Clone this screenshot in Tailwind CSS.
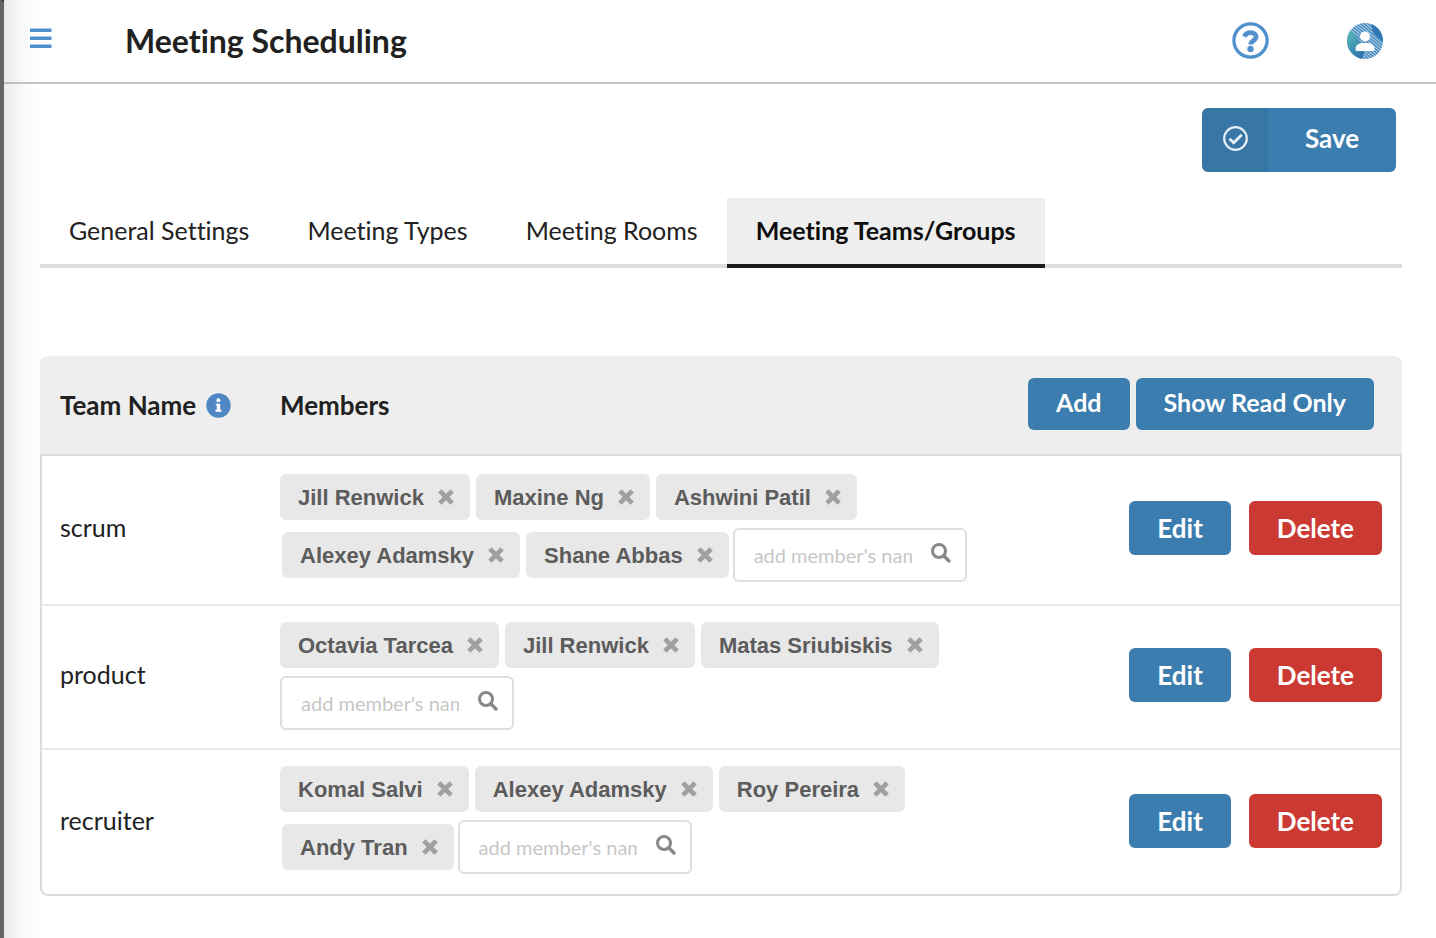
<!DOCTYPE html>
<html lang="en">
<head>
<meta charset="utf-8">
<meta name="viewport" content="width=device-width, initial-scale=1">
<title>Meeting Scheduling</title>
<script src="https://cdn.jsdelivr.net/npm/@tailwindcss/browser@4"></script>
</head>
<body class="min-h-screen bg-white font-['Lato',sans-serif] text-[26px] text-[#212121] [font-variant-ligatures:none]">
<svg class="hidden" aria-hidden="true">
  <symbol id="x" viewBox="0 0 16 16"><path d="M3.500 3.500 12.500 12.500M12.500 3.500 3.500 12.500" stroke="currentColor" stroke-width="4.600" stroke-linecap="square" fill="none"/></symbol>
  <symbol id="search" viewBox="0 0 20 20"><circle cx="8" cy="8" r="6.500" fill="none" stroke="currentColor" stroke-width="3"/><path d="m12.800 12.800 5.200 5.200" stroke="currentColor" stroke-width="3.400" stroke-linecap="round"/></symbol>
</svg>
<div class="flex min-h-screen">
  <aside class="w-1 shrink-0 bg-[#2b2b2b]"><div class="h-full rounded-tr-sm bg-[#666]"></div></aside>
  <div class="relative min-w-0 flex-1">
    <div class="pointer-events-none absolute inset-y-0 left-0 w-10 bg-linear-to-r from-black/8 via-black/2 to-transparent"></div>
    <header class="flex h-[84px] items-center border-b-2 border-[#c8c8c8] pr-[53px] pl-[26px]">
      <button type="button" aria-label="Open menu" class="mb-1.5 text-[#4f90cd]">
        <svg class="h-5 w-[22px]" viewBox="0 0 22 20" fill="currentColor"><path d="M0 .5h21.500v3.600H0zM0 8.500h21.500v3.600H0zM0 16.500h21.500v3.600H0z"/></svg>
      </button>
      <h1 class="ml-[73px] text-[32px] leading-10 font-bold">Meeting Scheduling</h1>
      <button type="button" aria-label="Help" class="mb-0.5 ml-auto text-[#4f90cd]">
        <svg class="size-[37px]" viewBox="0 0 37 37"><circle cx="18.500" cy="18.500" r="16.600" fill="none" stroke="currentColor" stroke-width="3.300"/><path d="M12.400 14.600C13.500 11.700 15.700 10.600 18.700 10.600c3.200 0 5.400 1.700 5.400 4.200 0 3.900-5.400 3.700-5.400 7.800" fill="none" stroke="currentColor" stroke-width="4.700"/><circle cx="18.500" cy="27" r="3.200" fill="currentColor"/></svg>
      </button>
      <button type="button" aria-label="Account" class="ml-[78px]">
        <svg class="size-9" viewBox="0 0 36 36">
          <defs>
            <clipPath id="disc"><circle cx="18" cy="18" r="18"/></clipPath>
            <pattern id="hatch" width="2.400" height="2.400" patternUnits="userSpaceOnUse" patternTransform="rotate(40)"><rect width="2.400" height="2.400" fill="#4a8ec2"/><rect width="2.400" height=".7" fill="#d5e6f2"/></pattern>
            <linearGradient id="teal" x1="0" y1="0" x2=".6" y2="1"><stop offset="0" stop-color="#63bfb5"/><stop offset=".4" stop-color="#4ba5b4"/><stop offset="1" stop-color="#2f76ae"/></linearGradient>
          </defs>
          <g clip-path="url(#disc)"><rect width="36" height="36" fill="url(#hatch)"/><path d="M0 6 5 9l12 14v7l-2 6H0z" fill="url(#teal)"/><path d="M24 0h12v19L26 10z" fill="#2f78b4"/></g>
          <circle cx="18" cy="13.500" r="5" fill="#fff"/><path d="M8.500 26c0-3.800 3.300-6 7-6h5c3.700 0 7 2.200 7 6 0 1.500-.8 2-2 2h-15c-1.200 0-2-.5-2-2z" fill="#fff"/>
        </svg>
      </button>
    </header>

    <main class="pt-6 pr-[34px] pb-10 pl-9">
      <div class="flex justify-end pr-1.5">
        <button type="button" class="flex h-16 overflow-hidden rounded-md bg-[#3b7dae] font-bold text-white">
          <span class="flex h-full w-[66px] items-center justify-center bg-black/5 pb-0.5">
            <svg class="mb-0.5 size-[25px]" viewBox="0 0 25 25" fill="none" stroke="#e6eef5"><circle cx="12.500" cy="12.500" r="11.300" stroke-width="2.200"/><path d="m6.500 12.800 4.200 4 8.100-8" stroke-width="2.900"/></svg>
          </span>
          <span class="flex h-full w-32 items-center justify-center pb-1">Save</span>
        </button>
      </div>

      <nav class="mt-[26px] flex h-[70px] border-b-4 border-[#dedede] text-[25px]" aria-label="Settings sections">
        <a href="#general" class="flex h-[66px] items-center px-[29px]">General Settings</a>
        <a href="#types" class="flex h-[66px] items-center px-[29px]">Meeting Types</a>
        <a href="#rooms" class="flex h-[66px] items-center px-[29px]">Meeting Rooms</a>
        <a href="#teams" aria-current="page" class="flex h-[70px] items-center border-b-4 border-[#1b1c1d] bg-[#eee] px-[29px] font-bold text-[#0d0d0d]">Meeting Teams/Groups</a>
      </nav>

      <div class="mt-[88px] overflow-hidden rounded-lg border-2 border-transparent [background:linear-gradient(#eee_98px,#dcdcdc_98px)_border-box]">
      <table class="w-full table-fixed border-collapse">
        <colgroup><col class="w-[238px]"><col><col class="w-[396px]"></colgroup>
        <thead class="bg-[#eee] text-left">
          <tr class="h-[97px] border-b-2 border-[#dadada]">
            <th scope="col" class="pb-0.5 pl-[18px] font-bold"><span class="flex items-center gap-2.5">Team Name
              <svg class="size-[25px]" viewBox="0 0 25 25" role="img" aria-label="Information"><circle cx="12.500" cy="12.500" r="12.200" fill="#4f86c3"/><circle cx="12.400" cy="7.300" r="2" fill="#fff"/><path d="M9.800 10.700h4.400v6.100h1.300v1.900H9.500v-1.900h1.300v-4.200H9.800z" fill="#fff"/></svg></span></th>
            <th scope="col" class="pb-0.5 font-bold">Members</th>
            <th scope="col" class="pr-[26px] text-[25px]"><div class="flex justify-end gap-1.5 pb-1">
              <button type="button" class="h-[52px] rounded-md bg-[#3b7dae] px-7 pb-0.5 font-bold text-white">Add</button>
              <button type="button" class="h-[52px] rounded-md bg-[#3b7dae] px-7 pb-0.5 font-bold text-white">Show Read Only</button></div></th>
          </tr>
        </thead>
        <tbody class="bg-white">
          <tr class="h-[150px] border-b-2 border-[#e8e8e8]">
            <td class="pb-1 pl-[18px] text-[25px]">scrum</td>
            <td><div class="flex flex-wrap items-center gap-y-2 pb-1 font-['Liberation_Sans',sans-serif] text-[22px] font-bold text-[#5c5c5c]">
              <span class="mr-1 flex h-[46px] items-center gap-3.5 rounded-md bg-[#e8e8e8] pr-4 pl-[18px]">Jill Renwick<button type="button" aria-label="Remove Jill Renwick" class="text-[#a0a0a0]"><svg class="size-4"><use href="#x"/></svg></button></span>
              <span class="mr-1 ml-0.5 flex h-[46px] items-center gap-3.5 rounded-md bg-[#e8e8e8] pr-4 pl-[18px]">Maxine Ng<button type="button" aria-label="Remove Maxine Ng" class="text-[#a0a0a0]"><svg class="size-4"><use href="#x"/></svg></button></span>
              <span class="mr-1 ml-0.5 flex h-[46px] items-center gap-3.5 rounded-md bg-[#e8e8e8] pr-4 pl-[18px]">Ashwini Patil<button type="button" aria-label="Remove Ashwini Patil" class="text-[#a0a0a0]"><svg class="size-4"><use href="#x"/></svg></button></span>
              <span class="mr-1 ml-0.5 flex h-[46px] items-center gap-3.5 rounded-md bg-[#e8e8e8] pr-4 pl-[18px]">Alexey Adamsky<button type="button" aria-label="Remove Alexey Adamsky" class="text-[#a0a0a0]"><svg class="size-4"><use href="#x"/></svg></button></span>
              <span class="mr-1 ml-0.5 flex h-[46px] items-center gap-3.5 rounded-md bg-[#e8e8e8] pr-4 pl-[18px]">Shane Abbas<button type="button" aria-label="Remove Shane Abbas" class="text-[#a0a0a0]"><svg class="size-4"><use href="#x"/></svg></button></span>
              <label class="flex h-[54px] items-center gap-[19px] rounded-md border-2 border-[#dedede] bg-white pr-3.5 pl-[19px] font-['Lato',sans-serif] text-[20px] font-normal"><input type="text" aria-label="Add member to scrum" placeholder="add member's name" class="w-[158px] outline-none placeholder:text-[#c7c7c7]"><svg class="mb-1 size-5 text-[#888]"><use href="#search"/></svg></label>
            </div></td>
            <td class="pr-[18px] pb-1"><div class="flex justify-end gap-[18px]">
              <button type="button" class="h-[54px] rounded-md bg-[#3b7dae] px-7 font-bold text-white">Edit</button>
              <button type="button" class="h-[54px] rounded-md bg-[#ca3a33] px-7 font-bold text-white">Delete</button></div></td>
          </tr>
          <tr class="h-36 border-b-2 border-[#e8e8e8]">
            <td class="pb-1 pl-[18px] text-[25px]">product</td>
            <td><div class="flex flex-wrap items-center gap-y-2 pb-0.5 font-['Liberation_Sans',sans-serif] text-[22px] font-bold text-[#5c5c5c]">
              <span class="mr-1 flex h-[46px] items-center gap-3.5 rounded-md bg-[#e8e8e8] pr-4 pl-[18px]">Octavia Tarcea<button type="button" aria-label="Remove Octavia Tarcea" class="text-[#a0a0a0]"><svg class="size-4"><use href="#x"/></svg></button></span>
              <span class="mr-1 ml-0.5 flex h-[46px] items-center gap-3.5 rounded-md bg-[#e8e8e8] pr-4 pl-[18px]">Jill Renwick<button type="button" aria-label="Remove Jill Renwick" class="text-[#a0a0a0]"><svg class="size-4"><use href="#x"/></svg></button></span>
              <span class="mr-1 ml-0.5 flex h-[46px] items-center gap-3.5 rounded-md bg-[#e8e8e8] pr-4 pl-[18px]">Matas Sriubiskis<button type="button" aria-label="Remove Matas Sriubiskis" class="text-[#a0a0a0]"><svg class="size-4"><use href="#x"/></svg></button></span>
              <label class="flex h-[54px] items-center gap-[19px] rounded-md border-2 border-[#dedede] bg-white pr-3.5 pl-[19px] font-['Lato',sans-serif] text-[20px] font-normal"><input type="text" aria-label="Add member to product" placeholder="add member's name" class="w-[158px] outline-none placeholder:text-[#c7c7c7]"><svg class="mb-1 size-5 text-[#888]"><use href="#search"/></svg></label>
            </div></td>
            <td class="pr-[18px] pb-1"><div class="flex justify-end gap-[18px]">
              <button type="button" class="h-[54px] rounded-md bg-[#3b7dae] px-7 font-bold text-white">Edit</button>
              <button type="button" class="h-[54px] rounded-md bg-[#ca3a33] px-7 font-bold text-white">Delete</button></div></td>
          </tr>
          <tr class="h-[145px]">
            <td class="pb-0.5 pl-[18px] text-[25px]">recruiter</td>
            <td><div class="flex flex-wrap items-center gap-y-2 pb-1 font-['Liberation_Sans',sans-serif] text-[22px] font-bold text-[#5c5c5c]">
              <span class="mr-1 flex h-[46px] items-center gap-3.5 rounded-md bg-[#e8e8e8] pr-4 pl-[18px]">Komal Salvi<button type="button" aria-label="Remove Komal Salvi" class="text-[#a0a0a0]"><svg class="size-4"><use href="#x"/></svg></button></span>
              <span class="mr-1 ml-0.5 flex h-[46px] items-center gap-3.5 rounded-md bg-[#e8e8e8] pr-4 pl-[18px]">Alexey Adamsky<button type="button" aria-label="Remove Alexey Adamsky" class="text-[#a0a0a0]"><svg class="size-4"><use href="#x"/></svg></button></span>
              <span class="mr-1 ml-0.5 flex h-[46px] items-center gap-3.5 rounded-md bg-[#e8e8e8] pr-4 pl-[18px]">Roy Pereira<button type="button" aria-label="Remove Roy Pereira" class="text-[#a0a0a0]"><svg class="size-4"><use href="#x"/></svg></button></span>
              <span class="mr-1 ml-0.5 flex h-[46px] items-center gap-3.5 rounded-md bg-[#e8e8e8] pr-4 pl-[18px]">Andy Tran<button type="button" aria-label="Remove Andy Tran" class="text-[#a0a0a0]"><svg class="size-4"><use href="#x"/></svg></button></span>
              <label class="flex h-[54px] items-center gap-[19px] rounded-md border-2 border-[#dedede] bg-white pr-3.5 pl-[19px] font-['Lato',sans-serif] text-[20px] font-normal"><input type="text" aria-label="Add member to recruiter" placeholder="add member's name" class="w-[158px] outline-none placeholder:text-[#c7c7c7]"><svg class="mb-1 size-5 text-[#888]"><use href="#search"/></svg></label>
            </div></td>
            <td class="pr-[18px] pb-0.5"><div class="flex justify-end gap-[18px]">
              <button type="button" class="h-[54px] rounded-md bg-[#3b7dae] px-7 font-bold text-white">Edit</button>
              <button type="button" class="h-[54px] rounded-md bg-[#ca3a33] px-7 font-bold text-white">Delete</button></div></td>
          </tr>
        </tbody>
      </table>
      </div>
    </main>
  </div>
</div>
</body>
</html>
